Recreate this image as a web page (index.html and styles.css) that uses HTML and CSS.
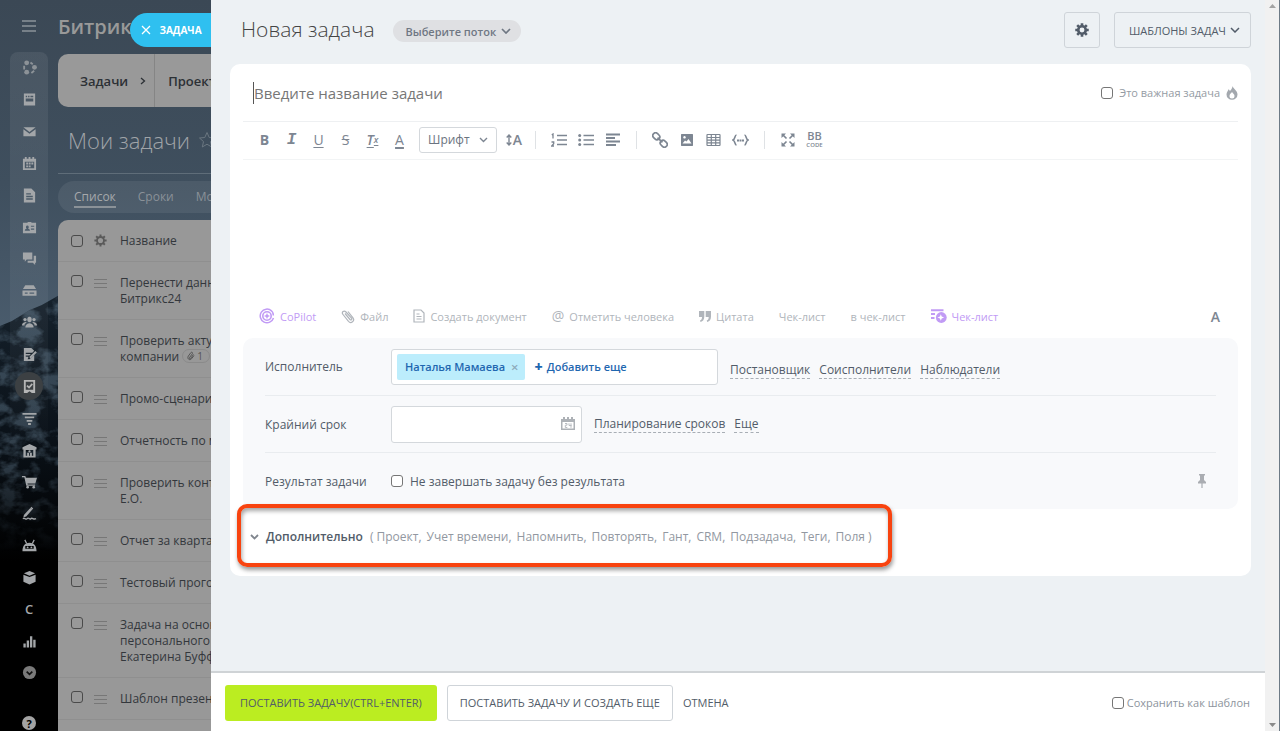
FILE: index.html
```html
<!DOCTYPE html>
<html lang="ru">
<head>
<meta charset="utf-8">
<title>Новая задача</title>
<link rel="stylesheet" href="styles.css">
</head>
<body>
<div class="layout">
  <aside class="portal">
    <svg class="wallpaper" viewBox="0 0 212 731" preserveAspectRatio="none" aria-hidden="true">
      <defs>
        <linearGradient id="sky" x1="0" y1="0" x2="0" y2="1">
          <stop offset="0" stop-color="#3b4855"/><stop offset=".25" stop-color="#3f4f5e"/><stop offset=".46" stop-color="#4a5c6d"/>
        </linearGradient>
        <linearGradient id="rock" x1="0" y1="0" x2="0" y2="1">
          <stop offset="0" stop-color="#16222d"/><stop offset=".35" stop-color="#0a1118"/><stop offset=".62" stop-color="#000"/>
        </linearGradient>
        <linearGradient id="fade" x1="0" y1="0" x2="0" y2="1">
          <stop offset="0" stop-color="#999"/><stop offset=".4" stop-color="#777"/><stop offset=".6" stop-color="#000"/>
        </linearGradient>
        <mask id="ridge"><path d="M0 326L12 321L30 310L42 305L58 296L80 285V731H0Z" fill="url(#fade)"/></mask>
        <filter id="grain" x="0" y="0" width="100%" height="100%">
          <feTurbulence type="fractalNoise" baseFrequency=".05 .07" numOctaves="4" seed="4"/>
          <feColorMatrix values="0 0 0 0 .1  0 0 0 0 .16  0 0 0 0 .22  4 0 0 0 -1.700"/>
        </filter>
      </defs>
      <rect width="212" height="731" fill="url(#sky)"/>
      <path d="M0 326L12 321L30 310L42 305L58 296L80 285V731H0Z" fill="url(#rock)"/>
      <g mask="url(#ridge)"><rect y="280" width="80" height="451" filter="url(#grain)"/></g>
    </svg>

    <nav class="menu" aria-label="Главное меню">
      <button class="menu-toggle" aria-label="Меню"><svg width="16" height="14" viewBox="0 0 16 14"><path d="M1 2h14M1 7h14M1 12h14" stroke="currentColor" stroke-width="1.6"/></svg></button>
      <ul class="menu-list">
        <li><a href="#" aria-label="Совместная работа"><svg viewBox="0 0 16 16"><g fill="currentColor" opacity=".75"><circle cx="5" cy="3" r="2.6"/><circle cx="13.3" cy="7.8" r="2.6"/><circle cx="5" cy="13" r="2.6"/></g><path d="M9 2.6l2.5 2M13 11.5l-3 2.3M2.3 6v4" stroke="currentColor" stroke-width="2" opacity=".75"/></svg></a></li>
        <li><a href="#" aria-label="Лента"><svg viewBox="0 0 16 16"><path fill="currentColor" fill-rule="evenodd" d="M2 1.500h12v13H2zM4 4v1.500h1.500V4zM6.500 4v1.500H8V4zM9 4v1.500h3V4zM4 7v3h8V7z"/></svg></a></li>
        <li><a href="#" aria-label="Почта"><svg viewBox="0 0 16 16"><path fill="currentColor" d="M1.500 3.500h13L8 8.500zM1.500 5.500L8 10.500l6.500-5V13h-13z"/></svg></a></li>
        <li><a href="#" aria-label="Календарь"><svg viewBox="0 0 16 16"><path fill="currentColor" fill-rule="evenodd" d="M1 3h2V1h2v2h2V1h2v2h2V1h2v2h2v12H1zM3 6v7h10V6z"/><path fill="currentColor" d="M4.500 7h2v2h-2zM7.200 7h2v2h-2zM10 7h2v2h-2zM4.500 10h2v2h-2zM7.200 10h2v2h-2z"/></svg></a></li>
        <li><a href="#" aria-label="Документы"><svg viewBox="0 0 16 16"><path fill="currentColor" fill-rule="evenodd" d="M2 .500h8l4 4v11H2zM4.500 5.500V7h5V5.500zM4.500 8.300v1.500h7V8.300zM4.500 11v1.500h7V11z"/></svg></a></li>
        <li><a href="#" aria-label="CRM"><svg viewBox="0 0 16 16"><path fill="currentColor" fill-rule="evenodd" d="M1 3h5V2h4v1h5v11H1zM3 11.500h5.500c0-1.500-1-2-2-2.200 1.300-1.300.7-3.500-.8-3.500S3.600 8 5 9.300c-1.200.2-2 .8-2 2.200zM9.500 6v1.300H13V6zM9.500 9v1.300H13V9z"/></svg></a></li>
        <li><a href="#" aria-label="Чат"><svg viewBox="0 0 16 16"><path fill="currentColor" d="M1 1.500h10v7.500H5L3 11.500V9H1zM12.500 5H15v7.500h-1V15l-2.500-2.500H6V10.500h6.500z"/></svg></a></li>
        <li><a href="#" aria-label="Диск"><svg viewBox="0 0 16 16"><path fill="currentColor" fill-rule="evenodd" d="M3.500 2.500h9L15 6.500H1zM.500 8h15v5.500H.500zM3 10v1.500h3V10zM8 10v1.500h5V10z"/></svg></a></li>
        <li><a href="#" aria-label="Группы"><svg viewBox="0 0 18 16"><g fill="currentColor"><ellipse cx="9" cy="4.500" rx="2.600" ry="3.300"/><path d="M4 14c0-3 1.500-4.500 5-5.200 3.500.7 5 2.200 5 5.200z"/><circle cx="3.600" cy="4.500" r="2"/><circle cx="14.400" cy="4.500" r="2"/><path d="M0 11.500c0-2.500 1-3.700 4.500-4.200l1.300 1C3.800 9 3 10 3 11.500zM18 11.500c0-2.500-1-3.700-4.500-4.200l-1.300 1c2 .7 2.800 1.700 2.800 3.200z"/></g></svg></a></li>
        <li><a href="#" aria-label="Подпись"><svg viewBox="0 0 16 16"><path fill="currentColor" fill-rule="evenodd" d="M2 1h8l3 3-2 2H4v1.400h5.500L8 9H4v1.400h3L6 13h2l5-4.500V15H2z"/><path d="M8.500 11.500L15 5" stroke="currentColor" stroke-width="2.200"/></svg></a></li>
        <li class="current"><a href="#" aria-label="Задачи"><svg viewBox="0 0 16 16"><path fill="currentColor" fill-rule="evenodd" d="M2 1h12v14h-3.500L8 13l-2.500 2H2zM4 3v8.500h8V3z"/><path d="M5.300 7l2.200 2.200 3.500-4" fill="none" stroke="currentColor" stroke-width="1.800"/></svg></a></li>
        <li><a href="#" aria-label="Воронка"><svg viewBox="0 0 16 16"><path d="M.500 3h15M3 6.800h10M5 10.500h6M6.500 13.800h3" stroke="currentColor" stroke-width="2"/></svg></a></li>
        <li><a href="#" aria-label="Склад"><svg viewBox="0 0 16 16"><path fill="currentColor" fill-rule="evenodd" d="M8 1l7.500 3.500V7h-1v8.500h-13V7h-1V4.500zM4 7.500v6h1.500v-3h2v3h1v-3h2v3H12v-6z"/><circle cx="8" cy="9" r="1.200" fill="currentColor"/></svg></a></li>
        <li><a href="#" aria-label="Магазин"><svg viewBox="0 0 16 16"><path fill="currentColor" d="M0 2h3.500l.7 2H16l-1.800 6H5.800l.3 1.200H14v1.300H4.600L2.500 3.500H0z"/><circle cx="6" cy="14" r="1.400" fill="currentColor"/><circle cx="12.500" cy="14" r="1.400" fill="currentColor"/></svg></a></li>
        <li><a href="#" aria-label="Подпись онлайн"><svg viewBox="0 0 16 16"><path fill="currentColor" d="M2 9.500L9 2l2 1.700-6.500 7.500-3 .8z"/><path d="M9.500 1.500l2 1.700M1 13.500c2-2 3 2 4.500 0s2.500 1.500 4 0 2.500 1.500 5.500 0" stroke="currentColor" stroke-width="1.500" fill="none"/></svg></a></li>
        <li><a href="#" aria-label="Автоматизация"><svg viewBox="0 0 16 16"><path fill="currentColor" fill-rule="evenodd" d="M.500 14c0-5 2-9 7.500-9s7.500 4 7.500 9zM3.500 8.500v3h9v-3z"/><path d="M3 2l2 4M13 2l-2 4" stroke="currentColor" stroke-width="1.300"/><circle cx="6" cy="10" r="1" fill="currentColor"/><circle cx="10" cy="10" r="1" fill="currentColor"/></svg></a></li>
        <li><a href="#" aria-label="Маркет"><svg viewBox="0 0 16 16"><path fill="currentColor" d="M8 1l6 2.500L8 6 2 3.500zM1.500 5L8 7.500 14.500 5v7.500L8 15.500l-6.500-3z"/></svg></a></li>
        <li><a href="#" class="letter">С</a></li>
        <li><a href="#" aria-label="Аналитика"><svg viewBox="0 0 16 16"><path fill="currentColor" d="M1.500 10H4v4.500H1.500zM5 7h2.500v7.500H5zM8.500 2.500H11v12H8.500zM12 6h2.500v8.500H12z"/></svg></a></li>
        <li><a href="#" aria-label="Еще"><svg viewBox="0 0 16 16"><circle cx="8" cy="8" r="7" fill="#7a7a7a"/><path d="M5 7l3 3 3-3" stroke="#111" stroke-width="1.800" fill="none"/></svg></a></li>
      </ul>
      <button class="help" aria-label="Помощь">?</button>
    </nav>

    <div class="page">
      <div class="brand">Битрикс24</div>
      <nav class="sections" aria-label="Разделы">
        <a href="#">Задачи <svg width="6" height="8" viewBox="0 0 6 8"><path d="M1 1l3.500 3L1 7" fill="none" stroke="currentColor" stroke-width="1.300"/></svg></a>
        <a href="#">Проекты</a>
      </nav>
      <h2 class="page-title">Мои задачи <svg width="18" height="18" viewBox="0 0 18 18"><path d="M9 1.500l2.200 5 5.300.500-4 3.600 1.200 5.400L9 13.200 4.300 16l1.200-5.400-4-3.600 5.300-.500z" fill="none" stroke="#6a7680"/></svg></h2>
      <nav class="views" aria-label="Представления">
        <a href="#" class="selected">Список</a><a href="#">Сроки</a><a href="#">Мой план</a>
      </nav>
      <table class="tasks">
        <thead><tr>
          <th><input type="checkbox" aria-label="Выбрать все"></th>
          <th><svg width="13" height="13" viewBox="0 0 16 16"><circle cx="8" cy="8" r="4.300" fill="none" stroke="#5a5a5a" stroke-width="2.300"/><path d="M8 .500v3M8 12.500v3M.500 8h3M12.500 8h3M2.700 2.700l2 2M11.300 11.300l2 2M2.700 13.300l2-2M11.300 4.700l2-2" stroke="#5a5a5a" stroke-width="2.400"/></svg></th>
          <th>Название</th>
        </tr></thead>
        <tbody>
          <tr><td><input type="checkbox" aria-label="Выбрать"></td><td><i class="grip"></i></td><td>Перенести данные<br>Битрикс24</td></tr>
          <tr><td><input type="checkbox" aria-label="Выбрать"></td><td><i class="grip"></i></td><td>Проверить актуальность<br>компании <span class="files"><svg width="8" height="10" viewBox="0 0 8 10"><path d="M6.500 3.500L3.500 7.500C2.800 8.300 1.800 7.500 2.400 6.700L5.200 3C6.200 1.500 4.700.600 3.800 1.700L1.400 5C-.300 7.500 2.500 10 4.500 7.800L7 4.500" fill="none" stroke="currentColor"/></svg>1</span></td></tr>
          <tr><td><input type="checkbox" aria-label="Выбрать"></td><td><i class="grip"></i></td><td>Промо-сценарий</td></tr>
          <tr><td><input type="checkbox" aria-label="Выбрать"></td><td><i class="grip"></i></td><td>Отчетность по маркетингу</td></tr>
          <tr><td><input type="checkbox" aria-label="Выбрать"></td><td><i class="grip"></i></td><td>Проверить контракт<br>Е.О.</td></tr>
          <tr><td><input type="checkbox" aria-label="Выбрать"></td><td><i class="grip"></i></td><td>Отчет за квартал</td></tr>
          <tr><td><input type="checkbox" aria-label="Выбрать"></td><td><i class="grip"></i></td><td>Тестовый прогон</td></tr>
          <tr><td><input type="checkbox" aria-label="Выбрать"></td><td><i class="grip"></i></td><td>Задача на основе<br>персонального<br>Екатерина Буффало</td></tr>
          <tr><td><input type="checkbox" aria-label="Выбрать"></td><td><i class="grip"></i></td><td>Шаблон презентации</td></tr>
          <tr><td><input type="checkbox" aria-label="Выбрать"></td><td><i class="grip"></i></td><td>&nbsp;</td></tr>
        </tbody>
      </table>
    </div>
    <button class="slider-label"><svg width="10" height="10" viewBox="0 0 10 10"><path d="M1 1l8 8M9 1l-8 8" stroke="#fff" stroke-width="1.300"/></svg>ЗАДАЧА</button>
  </aside>

  <main class="panel">
    <div class="content">
      <header class="header">
        <h1>Новая задача</h1>
        <button class="flow">Выберите поток <svg width="10" height="6" viewBox="0 0 10 6"><path d="M1 1l4 4 4-4" fill="none" stroke="currentColor" stroke-width="1.700"/></svg></button>
        <button class="ghost gear" aria-label="Настройки"><svg width="14" height="14" viewBox="0 0 16 16"><circle cx="8" cy="8" r="4.300" fill="none" stroke="currentColor" stroke-width="3"/><path d="M8 .300v3M8 12.700v3M.300 8h3M12.700 8h3M2.500 2.500l2 2M11.500 11.500l2 2M2.500 13.500l2-2M11.500 4.500l2-2" stroke="currentColor" stroke-width="3"/></svg></button>
        <button class="ghost templates">ШАБЛОНЫ ЗАДАЧ <svg width="10" height="6" viewBox="0 0 10 6"><path d="M1 1l4 4 4-4" fill="none" stroke="currentColor" stroke-width="1.500"/></svg></button>
      </header>

      <form class="card">
        <div class="title-row">
          <input class="title-input" type="text" placeholder="Введите название задачи" aria-label="Название задачи">
          <label class="important"><input type="checkbox"> Это важная задача
            <svg width="12" height="14" viewBox="0 0 12 14"><path fill="#a3a8ae" fill-rule="evenodd" d="M6.500 0C7 2.500 11.500 4.500 11.500 8.500a5.500 5.300 0 0 1-11 0C.500 6 2 5 2.500 3.200c.8.400 1.200 1 1.300 1.800C5 4 6.300 2.500 6.500 0zM6 6C5 7.500 3.500 8 3.500 10a2.500 2.500 0 0 0 5 0C8.500 8.200 7 7.500 6 6z"/></svg></label>
        </div>

        <div class="toolbar" role="toolbar" aria-label="Форматирование">
          <button type="button" class="tool bold">B</button>
          <button type="button" class="tool italic">I</button>
          <button type="button" class="tool underline">U</button>
          <button type="button" class="tool strike">S</button>
          <button type="button" class="tool clear">T<sub>x</sub></button>
          <button type="button" class="tool color">A</button>
          <span class="font-select"><select aria-label="Шрифт"><option>Шрифт</option></select><svg width="9" height="6" viewBox="0 0 9 6"><path d="M1 1l3.500 3.500L8 1" fill="none" stroke="currentColor" stroke-width="1.400"/></svg></span>
          <button type="button" class="tool size"><svg width="6" height="12" viewBox="0 0 6 12"><path d="M3 1.500v9M.700 3.500L3 1l2.300 2.500M.700 8.500L3 11l2.300-2.500" fill="none" stroke="currentColor" stroke-width="1.400"/></svg>A</button>
          <span class="split"></span>
          <button type="button" class="tool" aria-label="Нумерованный список"><svg width="16" height="14" viewBox="0 0 16 14"><path d="M6 2.500h10M6 7h10M6 11.500h10" stroke="currentColor" stroke-width="1.700"/><path d="M.800 2L2 1v4.500M.500 9h2.200v1.800L.700 13H3" fill="none" stroke="currentColor" stroke-width="1.300"/></svg></button>
          <button type="button" class="tool" aria-label="Маркированный список"><svg width="16" height="14" viewBox="0 0 16 14"><path d="M5.500 2.500H16M5.500 7H16M5.500 11.500H16" stroke="currentColor" stroke-width="1.700"/><g fill="currentColor"><circle cx="1.700" cy="2.500" r="1.500"/><circle cx="1.700" cy="7" r="1.500"/><circle cx="1.700" cy="11.500" r="1.500"/></g></svg></button>
          <button type="button" class="tool" aria-label="Выравнивание"><svg width="16" height="14" viewBox="0 0 16 14"><path d="M1 1.500h14M1 5h9M1 8.500h14M1 12h10" stroke="currentColor" stroke-width="1.800"/></svg></button>
          <span class="split"></span>
          <button type="button" class="tool" aria-label="Ссылка"><svg width="16" height="16" viewBox="0 0 16 16"><g fill="none" stroke="currentColor" stroke-width="1.700" transform="rotate(45 8 8)"><rect x="-1" y="5.200" width="7.500" height="5.600" rx="2.800"/><rect x="9.500" y="5.200" width="7.500" height="5.600" rx="2.800"/><path d="M4.500 8h7"/></g></svg></button>
          <button type="button" class="tool" aria-label="Картинка"><svg width="14" height="14" viewBox="0 0 14 14"><path fill="currentColor" fill-rule="evenodd" d="M1.500 1h11l.5.500v11l-.5.500h-11l-.5-.500v-11zM2.500 10.500h9L8.500 6 6.500 8.500 5 7.500zM4.500 3a1.300 1.300 0 1 0 .01 0z"/></svg></button>
          <button type="button" class="tool" aria-label="Таблица"><svg width="15" height="14" viewBox="0 0 15 14"><path d="M1.500 1.500h12q.5 0 .5.500v10q0 .5-.5.500h-12q-.5 0-.5-.500V2q0-.5.5-.500zM1 4.500h13M1 7.200h13M1 9.900h13M5.300 1.500v11M9.700 1.500v11" fill="none" stroke="currentColor" stroke-width="1.200"/></svg></button>
          <button type="button" class="tool" aria-label="Код"><svg width="17" height="12" viewBox="0 0 17 12"><path d="M4.500 1C2.500 1 3.500 5 1 6c2.500 1 1.500 5 3.500 5M12.500 1c2 0 1 4 3.500 5-2.500 1-1.500 5-3.500 5" fill="none" stroke="currentColor" stroke-width="1.600"/><path d="M5 6.500h2M7.500 6.500h2M10 6.500h2" stroke="currentColor" stroke-width="2"/></svg></button>
          <span class="split"></span>
          <button type="button" class="tool" aria-label="Развернуть"><svg width="14" height="14" viewBox="0 0 14 14"><path d="M5.500 5.500L1.500 1.500M8.500 5.500l4-4M5.500 8.500l-4 4M8.500 8.500l4 4" stroke="currentColor" stroke-width="1.700"/><path fill="currentColor" d="M.500.500H5L.500 5zM13.500.500V5L9 .500zM13.500 13.500H9L13.500 9zM.500 13.500V9L5 13.500z"/></svg></button>
          <button type="button" class="tool bb"><span>BB</span><small>CODE</small></button>
        </div>

        <textarea class="editor" aria-label="Описание задачи"></textarea>

        <div class="attach">
          <button type="button" class="ai"><svg width="16" height="16" viewBox="0 0 16 16"><circle cx="8" cy="8" r="4.200" fill="none" stroke="currentColor" stroke-width="1.600"/><path d="M12.500 2.800A6.800 6.800 0 1 0 14.500 10M11 1.800A6 6 0 0 1 14.300 7.500" fill="none" stroke="currentColor" stroke-width="1.500"/><path fill="currentColor" d="M8 5l.900 2.100L11 8l-2.100.900L8 11l-.900-2.100L5 8l2.100-.900z"/></svg>CoPilot</button>
          <button type="button"><svg width="14" height="15" viewBox="0 0 14 15"><path d="M4 4.500l5 6c1 1.200 2.500-.1 1.500-1.300L5 3C3 .800.200 3.200 2 5.500l5.500 6.800c2.500 2.900 6.700-.5 4.500-3.500L7 2.500" fill="none" stroke="currentColor" stroke-width="1.200"/></svg>Файл</button>
          <button type="button"><svg width="12" height="14" viewBox="0 0 12 14"><path d="M1 1h7l3 3v9H1zM3.500 5h3M3.500 7.500h5M3.500 10h5" fill="none" stroke="currentColor" stroke-width="1.200"/></svg>Создать документ</button>
          <button type="button"><span class="at">@</span>Отметить человека</button>
          <button type="button"><svg width="12" height="11" viewBox="0 0 12 11"><path fill="currentColor" d="M0 0h5.300v5.500C5.300 8.500 4 10.500 1.500 11l-.5-1.500C2.500 9 3 8 3 6H0zM6.700 0H12v5.500c0 3-1.300 5-3.800 5.500l-.5-1.500c1.500-.5 2-1.500 2-3.500h-3z"/></svg>Цитата</button>
          <button type="button">Чек-лист</button>
          <button type="button">в чек-лист</button>
          <button type="button" class="ai"><svg width="16" height="14" viewBox="0 0 16 14"><path d="M0 1.200h12.500M0 5h4M0 9h3.500" stroke="currentColor" stroke-width="2"/><circle cx="10.300" cy="8.500" r="5.400" fill="currentColor"/><path fill="#fff" d="M9.800 5.200l.9 2.400 2.400.9-2.400.9-.9 2.400-.9-2.400-2.400-.9 2.400-.9z"/></svg>Чек-лист</button>
          <button type="button" class="text-mode">A</button>
        </div>

        <div class="options">
          <div class="option">
            <span class="name">Исполнитель</span>
            <div class="people">
              <span class="person">Наталья Мамаева <button type="button" aria-label="Убрать">×</button></span>
              <button type="button" class="add"><b>+</b> Добавить еще</button>
            </div>
            <div class="links low"><a href="#">Постановщик</a><a href="#">Соисполнители</a><a href="#">Наблюдатели</a></div>
          </div>
          <div class="option">
            <label class="name" for="deadline">Крайний срок</label>
            <div class="date">
              <input id="deadline" type="text">
              <svg width="14" height="14" viewBox="0 0 14 14"><path fill="#adb1b6" fill-rule="evenodd" d="M0 2h2V0h2v2h2V0h2v2h2V0h2v2h2v11H0zM1.500 5v6.500h11V5z"/><path d="M4 6.500h2V8.200H4.300V10.500H6.300M8 6.300v2.200h2.500M10 6.300V10.800" fill="none" stroke="#b8bcc1"/></svg>
            </div>
            <div class="links"><a href="#">Планирование сроков</a><a href="#">Еще</a></div>
          </div>
          <div class="option">
            <span class="name">Результат задачи</span>
            <label class="result"><input type="checkbox"> Не завершать задачу без результата</label>
            <svg class="pin" width="8" height="14" viewBox="0 0 8 14"><path fill="#aaadb2" d="M1 0h6v1.500H6V6l2 2v1.500H4.600V14H3.400V9.500H0V8l2-2V1.500H1z"/></svg>
          </div>
        </div>

        <div class="extra">
          <button type="button" class="extra-toggle"><svg width="9" height="6" viewBox="0 0 9 6"><path d="M1 1l3.500 3.500L8 1" fill="none" stroke="#80868e" stroke-width="1.800"/></svg>Дополнительно</button>
          <div class="extra-list"><span>( Проект,</span><span>Учет времени,</span><span>Напомнить,</span><span>Повторять,</span><span>Гант,</span><span>CRM,</span><span>Подзадача,</span><span>Теги,</span><span>Поля )</span></div>
          <div class="highlight"></div>
        </div>
      </form>

      <footer class="footer">
        <button class="btn primary">ПОСТАВИТЬ ЗАДАЧУ(CTRL+ENTER)</button>
        <button class="btn outline">ПОСТАВИТЬ ЗАДАЧУ И СОЗДАТЬ ЕЩЕ</button>
        <button class="btn plain">ОТМЕНА</button>
        <label class="save"><input type="checkbox"> Сохранить как шаблон</label>
      </footer>
    </div>
    <div class="scrollbar" aria-hidden="true">
      <svg width="7" height="4" viewBox="0 0 7 4"><path d="M0 4l3.500-4L7 4z" fill="#a3a3a3"/></svg>
      <svg width="7" height="4" viewBox="0 0 7 4"><path d="M0 0l3.500 4L7 0z" fill="#8a8a8a"/></svg>
    </div>
  </main>
</div>
</body>
</html>
```
FILE: styles.css
```css
* { box-sizing: border-box; }
body { margin: 0; font-family: "Open Sans", "Noto Sans", sans-serif; font-size: 12px; color: #525c69; }
button { font: inherit; color: inherit; background: none; border: 0; padding: 0; display: inline-flex; align-items: center; justify-content: center; white-space: nowrap; cursor: pointer; }
a { color: inherit; text-decoration: none; }
svg { flex: none; }
input[type="checkbox"] { appearance: none; flex: none; width: 12px; height: 12px; margin: 0; border: 1px solid #767676; border-radius: 3px; background: #fff; }
.layout { display: flex; height: 100vh; min-height: 640px; overflow: hidden; }

/* Dimmed portal under the slider */
.portal { position: relative; flex: none; width: 211px; display: flex; overflow: hidden; background: #000; }
.wallpaper { position: absolute; inset: 0; width: 100%; height: 100%; }
.menu { position: relative; flex: none; width: 58px; display: flex; flex-direction: column; align-items: center; color: #a3a6a9; }
.menu-toggle { height: 52px; color: #8b9299; }
.menu-list { flex: 1; width: 38px; margin: 0; padding: 0; list-style: none; display: flex; flex-direction: column; border-radius: 8px; background: linear-gradient(rgba(255, 255, 255, .07), rgba(255, 255, 255, .04) 45%, transparent 65%); }
.menu-list li { flex: 1; display: flex; align-items: center; justify-content: center; }
.menu-list a { display: flex; align-items: center; justify-content: center; width: 28px; height: 28px; border-radius: 50%; }
.menu-list svg { width: 15px; height: 15px; }
.menu-list .current a { background: #3c4043; color: #b5b5b5; }
.letter { font-size: 13px; font-weight: 600; }
.help { width: 14px; height: 14px; margin: 27px 0 1px; border-radius: 50%; background: #a3a3a3; color: #000; font-size: 11px; font-weight: 700; }
.page { position: relative; flex: none; width: 400px; display: flex; flex-direction: column; }
.page > * { flex: none; }
.brand { width: 74px; height: 54px; overflow: hidden; line-height: 54px; font-size: 20px; font-weight: 600; color: #999; }
.sections { display: flex; height: 53px; border-radius: 10px; background: #999; color: #2c3035; font-size: 13px; font-weight: 600; }
.sections a { display: flex; align-items: center; gap: 12px; padding: 0 8px 0 22px; }
.sections a + a { border-left: 1px solid #858585; padding-left: 13px; }
.page-title { display: flex; align-items: center; gap: 8px; height: 67px; margin: 0; padding-left: 10px; border-bottom: 1px solid #5f6d79; font-size: 22px; font-weight: 300; color: #a0a4a8; }
.views { display: flex; align-items: center; gap: 22px; height: 32px; margin: 7px 0; padding: 2px 0 0 16px; border-radius: 16px; background: rgba(255, 255, 255, .07); color: #8a9198; font-size: 12px; }
.views a { border-bottom: 2px solid transparent; line-height: 18px; white-space: nowrap; }
.views .selected { color: #a5a8ab; border-color: #8b9298; }
.tasks { border-collapse: separate; border-spacing: 0; border-radius: 10px 10px 0 0; background: #989898; color: #33373c; font-size: 12px; line-height: 16px; }
.tasks th { height: 42px; padding: 0; font-weight: 400; text-align: left; vertical-align: middle; border-bottom: 1px solid #8f8f8f; }
.tasks th svg { display: block; }
.tasks td { padding: 13px 0 12px; vertical-align: top; border-bottom: 1px solid #8f8f8f; white-space: nowrap; }
.tasks th:first-child, .tasks td:first-child { width: 36px; padding-left: 13px; }
.tasks th:nth-child(2), .tasks td:nth-child(2) { width: 26px; }
.tasks th:nth-child(3), .tasks td:nth-child(3) { width: 338px; }
.tasks input { display: block; background: transparent; border-color: #4a4a4a; }
.grip { display: block; width: 13px; height: 9px; margin-top: 4px; border: solid #777; border-width: 1px 0; background: linear-gradient(#777, #777) center / 100% 1px no-repeat; }
.files { display: inline-flex; align-items: center; gap: 2px; height: 14px; padding: 0 6px 0 4px; border: 1px solid #8a8a8a; border-radius: 7px; font-size: 10px; line-height: 12px; color: #555; }
.slider-label { position: absolute; right: 0; top: 13px; width: 81px; height: 34px; padding-left: 2px; gap: 8px; border-radius: 17px 0 0 17px; background: #2fc0f0; color: #fff; font-size: 10px; font-weight: 700; }

/* Slider */
.panel { flex: 1; min-width: 0; display: flex; background: #edf1f4; border-right: 1px solid #6d7a86; }
.content { flex: 1; min-width: 0; display: flex; flex-direction: column; }
.scrollbar { flex: none; width: 14px; display: flex; flex-direction: column; align-items: center; justify-content: space-between; padding: 4px 0; background: #f1f1f1; }
.header { flex: none; display: flex; align-items: center; height: 64px; padding: 0 14px 4px 30px; }
.header h1 { margin: 0 0 3px; font-size: 21px; font-weight: 300; color: #444; white-space: nowrap; }
.flow { height: 22px; margin: 2px auto 0 18px; padding: 0 10px 0 13px; gap: 5px; border-radius: 11px; background: #dfe0e3; color: #6f7783; font-size: 11px; font-weight: 600; }
.ghost { height: 36px; border: 1px solid #cfd4d9; border-radius: 3px; color: #525c69; }
.gear { width: 36px; margin-right: 14px; }
.templates { padding: 0 10px 0 14px; gap: 4px; font-size: 11px; font-weight: 500; }

.card { position: relative; flex: none; margin: 0 14px 0 19px; padding: 0 13px; border-radius: 10px; background: #fff; }
.title-row { display: flex; align-items: center; height: 58px; padding: 0 0 0 10px; border-bottom: 1px solid #eef0f2; }
.title-input { flex: 1; min-width: 0; height: 22px; padding: 0; border: 0; border-left: 1px solid #555; outline: 0; font: inherit; font-size: 15px; color: #333; }
.title-input::placeholder { color: #777; }
.important { display: flex; align-items: center; gap: 6px; font-size: 11px; color: #959ca4; }

.toolbar { display: flex; align-items: center; height: 38px; padding: 0 0 2px 8px; border-bottom: 1px solid #f2f4f5; color: #7d8692; }
.tool { width: 27px; height: 24px; font-size: 14px; }
.bold { font-weight: 700; }
.italic { font-family: "Liberation Mono", monospace; font-weight: 700; font-style: italic; font-size: 16px; }
.underline { text-decoration: underline; text-underline-offset: 2px; }
.strike { text-decoration: line-through; }
.clear { font-style: italic; text-decoration: underline; text-underline-offset: 2px; font-weight: 600; }
.clear sub { font-size: 9px; line-height: 9px; }
.color { text-decoration: underline 2px; text-underline-offset: 2px; }
.font-select { display: flex; align-items: center; width: 78px; height: 26px; margin: 0 6px; padding: 0 8px; border: 1px solid #d4d8dc; border-radius: 3px; }
.font-select select { flex: 1; min-width: 0; appearance: none; border: 0; background: none; padding: 0; font: inherit; font-size: 12px; color: #6b7480; }
.size { width: 22px; gap: 1px; font-weight: 600; }
.split { width: 1px; height: 18px; margin: 0 9px 0 10px; background: #dfe2e5; }
.bb { flex-direction: column; font-size: 11px; font-weight: 600; line-height: 10px; }
.bb small { font-size: 6px; line-height: 8px; }
.editor { display: block; width: 100%; height: 138px; border: 0; outline: 0; resize: none; font: inherit; }

.attach { display: flex; align-items: center; gap: 25px; height: 40px; padding: 0 18px 4px 16px; font-size: 11px; color: #b0b5bb; }
.attach button { gap: 5px; }
.attach .ai { color: #c19bf5; }
.at { font-size: 14px; line-height: 14px; }
.attach .text-mode { margin-left: auto; font-size: 14px; font-weight: 600; color: #7d8692; }

.options { padding: 0 22px; border-radius: 10px; background: #f8f9fb; }
.option { display: flex; align-items: center; height: 57px; }
.option + .option { border-top: 1px solid #e9ecef; }
.name { flex: none; width: 126px; }
.people { flex: none; display: flex; align-items: center; width: 327px; height: 36px; padding: 0 5px; border: 1px solid #d4d8dc; border-radius: 3px; background: #fff; color: #1f67b0; font-size: 11px; font-weight: 600; }
.person { display: flex; align-items: center; height: 26px; padding: 0 6px 0 8px; gap: 6px; border-radius: 2px; background: #bcedfc; }
.person button { color: #8da9b8; font-size: 13px; }
.add { margin-left: 10px; gap: 4px; }
.add b { font-size: 14px; }
.links { display: flex; gap: 9px; margin-left: 12px; }
.links a { border-bottom: 1px dashed #a8aeb5; line-height: 16px; white-space: nowrap; }
.low { padding-top: 8px; }
.date { flex: none; display: flex; align-items: center; width: 191px; height: 37px; padding: 0 6px; border: 1px solid #d4d8dc; border-radius: 3px; background: #fff; }
.date input { flex: 1; min-width: 0; border: 0; outline: 0; font: inherit; }
.result { display: flex; align-items: center; gap: 7px; }
.pin { margin: 0 10px 0 auto; }

.extra { position: relative; display: flex; align-items: center; height: 67px; padding: 0 0 12px 7px; }
.extra-toggle { gap: 7px; font-weight: 600; }
.extra-list { display: flex; gap: 5px; margin-left: 7px; color: #9298a1; white-space: nowrap; }
.highlight { position: absolute; left: -6px; top: -5px; width: 655px; height: 63px; border: 4px solid #f8430f; border-radius: 10px; box-shadow: 1px 3px 4px rgba(0, 0, 0, .4), inset 1px 3px 4px rgba(0, 0, 0, .35); pointer-events: none; }

.footer { flex: none; display: flex; align-items: center; height: 60px; margin-top: auto; padding: 1px 15px 0 14px; border-top: 2px solid #cfd3d6; background: #fff; }
.btn { height: 36px; border-radius: 3px; font-size: 11px; font-weight: 400; }
.primary { padding: 0 15px; background: #bbed21; }
.outline { margin: 0 10px; padding: 0 12px; border: 1px solid #cfd4d9; }
.save { display: flex; align-items: center; gap: 3px; margin-left: auto; font-size: 11px; color: #8d949d; }
```
